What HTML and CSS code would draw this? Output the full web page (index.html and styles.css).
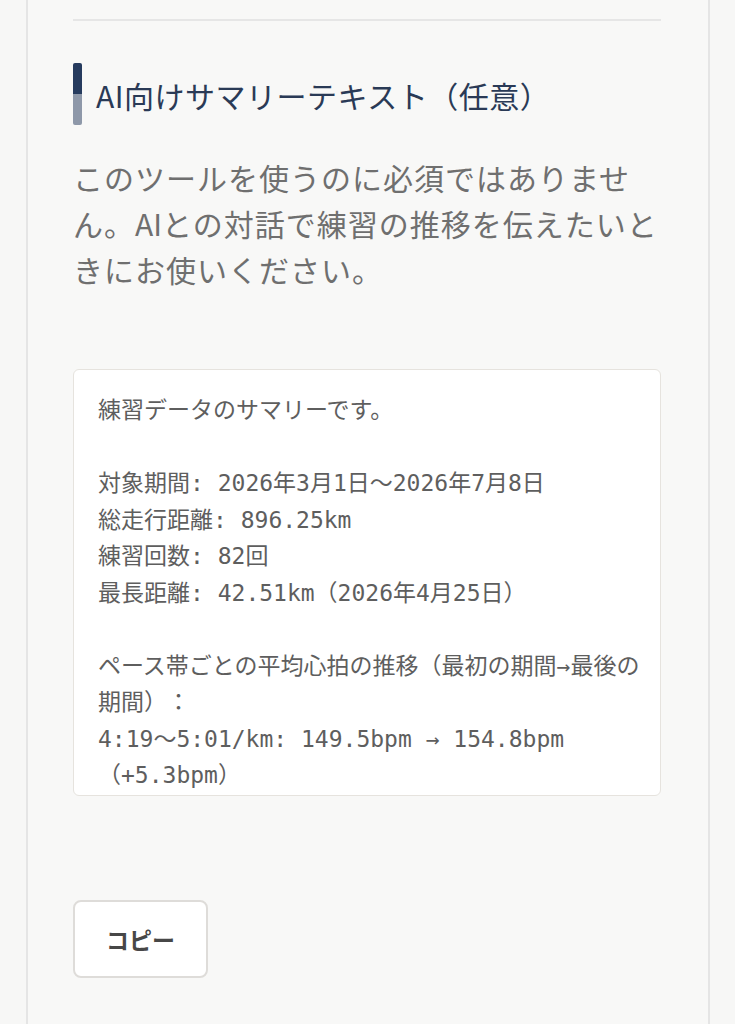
FILE: index.html
```html
<!DOCTYPE html>
<html lang="ja">
<head>
<meta charset="utf-8">
<title>AI向けサマリーテキスト</title>
<link rel="stylesheet" href="styles.css">
</head>
<body>
<main class="card">
  <hr class="divider">
  <section class="summary">
    <h2 class="heading"><span class="bar"></span><span class="heading-text">AI向けサマリーテキスト（任意）</span></h2>
    <p class="lead">このツールを使うのに必須ではありません。<span class="latin">AI</span>との対話で練習の推移を伝えたいときにお使いください。</p>
    <div class="output">練習データのサマリーです。

対象期間: 2026年3月1日～2026年7月8日
総走行距離: 896.25km
練習回数: 82回
最長距離: 42.51km（2026年4月25日）

ペース帯ごとの平均心拍の推移（最初の期間→最後の期間）：
4:19～5:01/km: 149.5bpm → 154.8bpm（+5.3bpm）
5:01～5:40/km: 142.1bpm → 146.0bpm（+3.9bpm）
5:40～6:20/km: 136.4bpm → 139.2bpm（+2.8bpm）</div>
    <div class="actions">
      <button class="copy" type="button">コピー</button>
    </div>
  </section>
</main>
</body>
</html>
```

FILE: styles.css
```css
html, body {
  margin: 0;
  padding: 0;
}
body {
  background: #f7f7f6;
  font-family: "Noto Sans CJK JP", "Noto Sans", sans-serif;
  height: 1024px;
  overflow: hidden;
  text-spacing-trim: space-all;
}
.card {
  margin-left: 26px;
  width: 590px;
  min-height: 1100px;
  padding: 0 45px;
  background: #f8f8f7;
  border-left: 2px solid #e5e5e5;
  border-right: 2px solid #e5e5e5;
}
.divider {
  margin: 0;
  padding-top: 19px;
  border: 0;
  border-bottom: 2px solid #e6e6e6;
  height: 0;
  width: 588px;
}
.summary {
  width: 588px;
  padding-top: 42px;
}
.heading {
  display: flex;
  align-items: center;
  gap: 14px;
  margin: 0;
  height: 62px;
}
.bar {
  flex: none;
  width: 9px;
  height: 62px;
  border-radius: 2px;
  background: linear-gradient(to bottom, #263b5e 0, #263b5e 50%, #8e98a9 50%, #8e98a9 100%);
}
.heading-text {
  font-size: 30px;
  font-weight: 400;
  letter-spacing: 0.5px;
  color: #2a3a56;
  line-height: 1.3;
  padding-top: 2px;
}
.lead {
  margin: 29px 0 0;
  width: 588px;
  font-size: 30px;
  letter-spacing: 1px;
  line-height: 46px;
  color: #6f6f6f;
}
.latin {
  letter-spacing: 0;
}
.output {
  box-sizing: border-box;
  margin-top: 77px;
  height: 427px;
  overflow: hidden;
  background: #ffffff;
  border: 1px solid #e6e3de;
  border-radius: 6px;
  padding: 22px 18px 0 24px;
  font-family: "DejaVu Sans Mono", "Noto Sans CJK JP", monospace;
  font-size: 23px;
  line-height: 36.5px;
  color: #5e5e5e;
  white-space: pre-wrap;
  word-break: normal;
  line-break: strict;
}
.actions {
  display: flex;
  margin-top: 104px;
}
.copy {
  width: 135px;
  height: 78px;
  background: #ffffff;
  border: 2px solid #dedcd9;
  border-radius: 8px;
  font-family: "Noto Sans CJK JP", sans-serif;
  font-size: 23px;
  font-weight: 700;
  color: #474747;
  padding: 0;
}
```
